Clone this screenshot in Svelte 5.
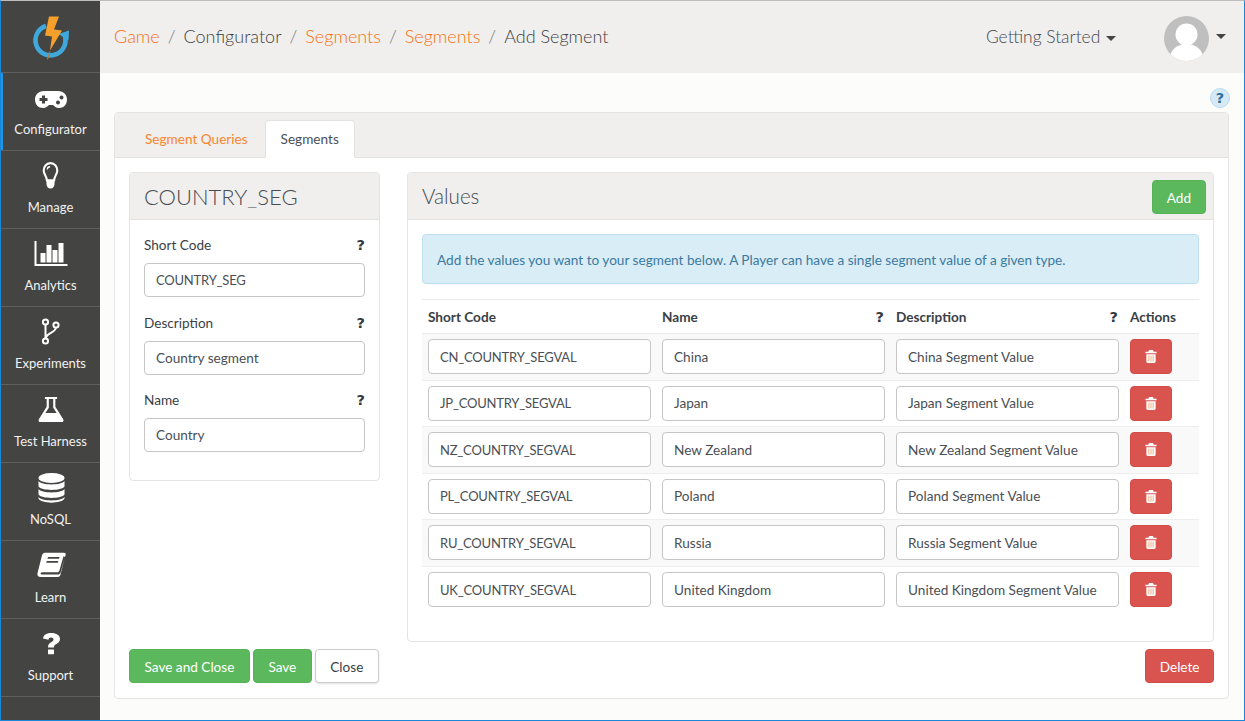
<script lang="ts">
	const nav = [
		{ label: 'Configurator', icon: 'pad', active: true },
		{ label: 'Manage', icon: 'bulb' },
		{ label: 'Analytics', icon: 'chart' },
		{ label: 'Experiments', icon: 'fork' },
		{ label: 'Test Harness', icon: 'flask' },
		{ label: 'NoSQL', icon: 'db' },
		{ label: 'Learn', icon: 'book' },
		{ label: 'Support', icon: 'help' }
	];

	const crumbs = [
		{ text: 'Game', link: true },
		{ text: 'Configurator', link: false },
		{ text: 'Segments', link: true },
		{ text: 'Segments', link: true },
		{ text: 'Add Segment', link: false }
	];

	const fields = [
		{ label: 'Short Code', value: 'COUNTRY_SEG', code: true },
		{ label: 'Description', value: 'Country segment' },
		{ label: 'Name', value: 'Country' }
	];

	const rows = [
		['CN_COUNTRY_SEGVAL', 'China', 'China Segment Value'],
		['JP_COUNTRY_SEGVAL', 'Japan', 'Japan Segment Value'],
		['NZ_COUNTRY_SEGVAL', 'New Zealand', 'New Zealand Segment Value'],
		['PL_COUNTRY_SEGVAL', 'Poland', 'Poland Segment Value'],
		['RU_COUNTRY_SEGVAL', 'Russia', 'Russia Segment Value'],
		['UK_COUNTRY_SEGVAL', 'United Kingdom', 'United Kingdom Segment Value']
	];
</script>

<div class="window">
	<aside class="sidebar">
		<div class="logo">
			<svg viewBox="28 11.5 44 50" width="44" height="50">
				<path d="M45 25.5 A15 15 0 1 0 64 36" fill="none" stroke="#3fa9dd" stroke-width="4.6" />
				<path d="M57.5 33.5 L68 30 L67.5 40 Z" fill="#3fa9dd" />
				<path d="M48 16 L58 16 L53 29 L61 30 L49 50 L51 36 L44 35 Z" fill="#f6a02c" />
				<path d="M49 51 L46.5 59" stroke="#b07a3c" stroke-width="1.1" />
			</svg>
		</div>
		{#each nav as item}
			<div class="nav-item" class:active={item.active}>
				<svg class="nav-icon" viewBox="0 0 32 32" width="32" height="32" fill="#fff">
					{#if item.icon === 'pad'}
						<path transform="translate(0 1)" fill-rule="evenodd" d="M9 7 H23 C28.5 7 32 11 32 15.5 C32 20.5 28.5 24 24 24 C21 24 19.5 22.5 18 21 H14 C12.5 22.5 11 24 8 24 C3.5 24 0 20.5 0 15.5 C0 11 3.5 7 9 7 Z M7 11.5 V14 H4.5 V17 H7 V19.5 H10 V17 H12.5 V14 H10 V11.5 Z M23 16.5 a2 2 0 1 0 0.01 0 Z M26.5 11.5 a2 2 0 1 0 0.01 0 Z" />
					{:else if item.icon === 'bulb'}
						<g transform="translate(2.7 -0.5) scale(0.8 0.9)">
							<path fill="none" stroke="#fff" stroke-width="2.6" d="M16 3 C10.5 3 7.5 7 7.5 11 C7.5 15 11 17 11.5 22 H20.5 C21 17 24.5 15 24.5 11 C24.5 7 21.5 3 16 3 Z" />
							<path fill="none" stroke="#fff" stroke-width="1.6" d="M12 10 C12 8 13.5 7 15.5 7" />
							<path d="M11 22 H21 V26 C21 29 19 31 16 31 C13 31 11 29 11 26 Z" />
						</g>
					{:else if item.icon === 'chart'}
						<path d="M-0.5 2 H1.5 V25 H32.5 V27 H-0.5 Z" />
						<rect x="5.5" y="14" width="5" height="9.5" />
						<rect x="11.5" y="6" width="5" height="17.5" />
						<rect x="17.5" y="11" width="5" height="12.5" />
						<rect x="23.5" y="4" width="5" height="19.5" />
					{:else if item.icon === 'fork'}
						<g fill="none" stroke="#fff" stroke-width="2">
							<circle cx="10.5" cy="5" r="2.6" />
							<circle cx="21" cy="8" r="2.6" />
							<circle cx="10.5" cy="24" r="2.6" />
							<path d="M10.5 7.5 V21.5 M21 10.5 C20.5 16 12 15 10.5 21.5" />
						</g>
					{:else if item.icon === 'flask'}
						<path transform="translate(2.1 1.2) scale(0.87 0.82)" fill-rule="evenodd" d="M9 1 H23 V3.5 H21 V13 L30 28 C31 30 30 31.5 28 31.5 H4 C2 31.5 1 30 2 28 L11 13 V3.5 H9 Z M13.5 3.5 V14 L9.5 20.5 H22.5 L18.5 14 V3.5 Z" />
					{:else if item.icon === 'db'}
						<ellipse cx="16.5" cy="5" rx="13" ry="5" />
						<path d="M3.5 8 C6 12.5 27 12.5 29.5 8 V13.5 C27 18 6 18 3.5 13.5 Z" />
						<path d="M3.5 16 C6 20.5 27 20.5 29.5 16 V21.5 C27 26 6 26 3.5 21.5 Z" />
						<path d="M3.5 24 C6 28.5 27 28.5 29.5 24 V25.5 C27 31 6 31 3.5 25.5 Z" />
					{:else if item.icon === 'book'}
						<path transform="translate(1 0) scale(1 0.87)" fill-rule="evenodd" d="M9 2 H28 C29.5 2 30 3 29.6 4.5 L24.5 25 C24 26.5 23 27 22 27 H6 C4 27 4 25 6 24.5 H21 C22.5 24.5 23 24 23.4 22.5 L27.5 6 L29 7 L24.5 27 C24 29 23 30 21 30 H5 C2 30 1 28 1.5 25.5 L6 5 C6.5 3 7.5 2 9 2 Z M12 7 L11.4 9 H23 L23.6 7 Z M10.8 11.5 L10.2 13.5 H21.8 L22.4 11.5 Z" />
					{:else}
						<g transform="translate(0 2.4) scale(1 0.8)">
							<path d="M8 9 C8.5 4 12 2 16.5 2 C21.5 2 25 5 25 9.5 C25 13 23 14.5 21 16 C19.5 17 19 18 19 20 H13 C13 16.5 14 15 16 13.5 C17.5 12.5 18.5 11.5 18.5 10 C18.5 8.5 17.5 7.5 16 7.5 C14.5 7.5 13.5 8.5 13.5 10.5 Z" />
							<rect x="13" y="22.5" width="6" height="6" rx="0.5" />
						</g>
					{/if}
				</svg>
				<span>{item.label}</span>
			</div>
		{/each}
	</aside>

	<div class="content">
		<header class="topbar">
			<nav class="breadcrumb">
				{#each crumbs as crumb, i}
					{#if i > 0}<span class="sep">/</span>{/if}
					<span class:link={crumb.link}>{crumb.text}</span>
				{/each}
			</nav>
			<div class="started">Getting Started <i class="caret"></i></div>
			<div class="avatar">
				<svg viewBox="0 0 45 45" width="45" height="45">
					<defs><clipPath id="avatar-clip"><circle cx="22.5" cy="22.5" r="22.5" /></clipPath></defs>
					<g clip-path="url(#avatar-clip)">
						<rect width="45" height="45" fill="#bfbfbf" />
						<circle cx="22.5" cy="18.5" r="11" fill="#fff" />
						<ellipse cx="22.5" cy="42" rx="16.5" ry="14" fill="#fff" />
					</g>
				</svg>
			</div>
			<i class="caret"></i>
		</header>

		<main class="page">
			<div class="help-row"><span class="help-dot">?</span></div>

			<section class="outer">
				<div class="tabs">
					<span class="tab">Segment Queries</span>
					<span class="tab current">Segments</span>
				</div>

				<div class="tab-body">
					<div class="columns">
						<div class="panel left">
							<div class="panel-head"><h2>COUNTRY_SEG</h2></div>
							<div class="panel-body">
								{#each fields as field}
									<div class="field">
										<div class="field-label"><span>{field.label}</span><b class="q">?</b></div>
										<input class:code={field.code} value={field.value} />
									</div>
								{/each}
							</div>
						</div>

						<div class="panel right">
							<div class="panel-head">
								<h2 class="values-title">Values</h2>
								<button class="btn green add">Add</button>
							</div>
							<div class="panel-body values">
								<div class="alert">Add the values you want to your segment below. A Player can have a single segment value of a given type.</div>
								<table>
									<thead>
										<tr>
											<th>Short Code</th>
											<th><span class="th-inner">Name<b class="q">?</b></span></th>
											<th><span class="th-inner">Description<b class="q">?</b></span></th>
											<th>Actions</th>
										</tr>
									</thead>
									<tbody>
										{#each rows as row}
											<tr>
												{#each row as cell, i}
													<td><input class:code={i === 0} value={cell} /></td>
												{/each}
												<td>
													<button class="btn red trash" aria-label="Delete row">
														<svg viewBox="0 0 12 14" width="12" height="13">
															<path fill="#fff" d="M4 0 H8 L9 2 H12 V3.5 H0 V2 H3 Z" />
															<path fill="#fff" d="M1 4.5 H11 V12.5 C11 13.4 10.4 14 9.5 14 H2.5 C1.6 14 1 13.4 1 12.5 Z" />
															<path stroke="#eda878" stroke-width="1" d="M3.7 6 V12.5 M6 6 V12.5 M8.3 6 V12.5" />
														</svg>
													</button>
												</td>
											</tr>
										{/each}
									</tbody>
								</table>
							</div>
						</div>
					</div>

					<div class="footer">
						<button class="btn green">Save and Close</button>
						<button class="btn green">Save</button>
						<button class="btn plain">Close</button>
						<button class="btn red push">Delete</button>
					</div>
				</div>
			</section>
		</main>
	</div>
</div>

<style>
	:global(body) {
		margin: 0;
		font-family: 'Lato', 'Noto Sans', sans-serif;
		color: #3a3f46;
	}

	.window {
		box-sizing: border-box;
		width: 1245px;
		height: 721px;
		display: flex;
		overflow: hidden;
		border: 1px solid #1b87d8;
		border-top-color: #bdbdbd;
		background: #fcfcfa;
	}

	.sidebar {
		width: 99px;
		flex: none;
		background: #444442;
		color: #fff;
	}

	.logo {
		height: 71px;
		display: flex;
		align-items: center;
		justify-content: center;
		border-bottom: 1px solid #5f5f5d;
	}

	.nav-item {
		box-sizing: border-box;
		height: 78px;
		display: flex;
		flex-direction: column;
		align-items: center;
		padding-top: 10px;
		border-bottom: 1px solid #5f5f5d;
		font-size: 13px;
		color: #f2f2f2;
	}

	.nav-item.active {
		box-shadow: inset 2px 0 0 #1b95e8;
	}

	.nav-icon {
		height: 32px;
		width: 32px;
		margin-bottom: 6px;
		overflow: visible;
	}

	.content {
		flex: 1;
		min-width: 0;
		display: flex;
		flex-direction: column;
	}

	.topbar {
		box-sizing: border-box;
		height: 72px;
		flex: none;
		display: flex;
		align-items: center;
		padding: 0 18px 1px 14px;
		background: #f0efee;
		font-size: 18px;
		font-weight: 300;
	}

	.breadcrumb {
		flex: 1;
		display: flex;
		gap: 8px;
		margin-bottom: 2px;
		color: #3f3f3f;
	}

	.link {
		color: #f76f10;
	}

	.sep {
		color: #777;
	}

	.started {
		margin-right: 48px;
		font-size: 17.4px;
		color: #43484e;
	}

	.caret {
		display: inline-block;
		width: 0;
		height: 0;
		margin-left: 1px;
		vertical-align: middle;
		border: 5px solid transparent;
		border-top-color: #444;
		border-bottom: 0;
	}

	.avatar {
		height: 45px;
		margin-top: 3px;
		margin-right: 6px;
	}

	.page {
		flex: 1;
		padding: 15px 15px 21px 14px;
		display: flex;
		flex-direction: column;
	}

	.help-row {
		height: 24px;
		display: flex;
		justify-content: flex-end;
	}

	.help-dot {
		box-sizing: border-box;
		width: 20px;
		height: 20px;
		border-radius: 50%;
		margin-right: -1px;
		background: #d6eaf6;
		border: 1px solid #b8dcf2;
		color: #2a6f9e;
		font-family: 'DejaVu Sans', sans-serif;
		font-size: 14.5px;
		font-weight: 700;
		line-height: 18px;
		text-align: center;
	}

	.outer {
		flex: 1;
		display: flex;
		flex-direction: column;
		background: #fff;
		border: 1px solid #e4e4e2;
		border-radius: 4px;
	}

	.tabs {
		height: 44px;
		flex: none;
		display: flex;
		align-items: flex-end;
		padding-left: 14px;
		background: #f0efee;
		border-bottom: 1px solid #e2e2e0;
		border-radius: 4px 4px 0 0;
		font-size: 13.6px;
	}

	.tab {
		box-sizing: border-box;
		height: 38px;
		margin-bottom: -1px;
		padding: 0 15px;
		line-height: 37px;
		color: #f9852d;
		border: 1px solid transparent;
	}

	.tab.current {
		margin-left: 1px;
		color: #4a4f55;
		background: #fff;
		border-color: #e2e2e0;
		border-bottom-color: #fff;
		border-radius: 4px 4px 0 0;
	}

	.tab-body {
		flex: 1;
		display: flex;
		flex-direction: column;
		padding: 14px 14px 15px 14px;
	}

	.columns {
		flex: 1;
		display: flex;
		align-items: flex-start;
		gap: 27px;
	}

	.panel {
		box-sizing: border-box;
		background: #fff;
		border: 1px solid #e4e4e2;
		border-radius: 4px;
	}

	.left {
		width: 251px;
		height: 309px;
	}

	.right {
		flex: 1;
		height: 470px;
	}

	.panel-head {
		box-sizing: border-box;
		height: 47px;
		display: flex;
		align-items: center;
		justify-content: space-between;
		padding: 0 7px 0 14px;
		background: #f0efee;
		border-bottom: 1px solid #e2e2e0;
		border-radius: 4px 4px 0 0;
	}

	h2 {
		margin: 0;
		font-size: 22px;
		font-weight: 300;
		color: #474c52;
	}

	.values-title {
		font-size: 20.6px;
	}

	.panel-body {
		padding: 14px;
	}

	.field {
		margin-bottom: 14.5px;
	}

	.field-label {
		display: flex;
		justify-content: space-between;
		height: 29px;
		font-size: 13.6px;
		line-height: 22px;
	}

	.q {
		font-family: 'DejaVu Sans', sans-serif;
		font-weight: 700;
		font-size: 14.5px;
		color: #33383e;
	}

	input {
		box-sizing: border-box;
		display: block;
		width: 100%;
		height: 34px;
		padding: 0 11px;
		font: inherit;
		font-size: 13.6px;
		color: #4a4f55;
		background: #fff;
		border: 1px solid #c6c6c6;
		border-radius: 4px;
		outline: none;
	}

	input.code {
		font-size: 13px;
		letter-spacing: -0.2px;
	}

	td input {
		height: 35px;
	}

	.alert {
		box-sizing: border-box;
		height: 50px;
		padding: 0 14px;
		margin-bottom: 15px;
		line-height: 50px;
		font-size: 13.6px;
		color: #3c7a9e;
		background: #d9edf7;
		border: 1px solid #bcdff1;
		border-radius: 4px;
	}

	table {
		width: 100%;
		table-layout: fixed;
		border-collapse: collapse;
		font-size: 13.6px;
	}

	th {
		height: 33px;
		padding: 0 6px;
		text-align: left;
		font-weight: 700;
		color: #3a3f46;
		border-top: 1px solid #eaeaea;
		border-bottom: 1px solid #eaeaea;
	}

	th:last-child {
		width: 63px;
	}

	.th-inner {
		display: flex;
		justify-content: space-between;
	}

	td {
		box-sizing: border-box;
		height: 46.5px;
		padding: 0 5px 0 6px;
		border-bottom: 1px solid #eeeeee;
	}

	tbody tr:nth-child(odd) {
		background: #f9f9f9;
	}

	tbody tr:last-child td {
		border-bottom: 0;
	}

	td:last-child {
		padding-right: 0;
	}

	.btn {
		box-sizing: border-box;
		height: 34px;
		padding: 1px 14.5px 0;
		font: inherit;
		font-size: 13.6px;
		border: 1px solid transparent;
		border-radius: 4px;
	}

	.add {
		margin-top: 2px;
		padding: 1px 14px 0;
	}

	.green {
		color: #fff;
		background: #5cb85c;
		border-color: #56b256;
	}

	.red {
		color: #fff;
		background: #d9534f;
		border-color: #d24b47;
	}

	.plain {
		color: #3a3f46;
		background: #fff;
		border-color: #cccccc;
		box-shadow: 0 1px 2px rgba(0, 0, 0, 0.12);
	}

	.trash {
		width: 42px;
		height: 35px;
		padding: 0;
		display: flex;
		align-items: center;
		justify-content: center;
	}

	.footer {
		display: flex;
		gap: 3px;
		margin-top: auto;
	}

	.push {
		margin-left: auto;
		padding: 1px 13.5px 0;
	}
</style>
